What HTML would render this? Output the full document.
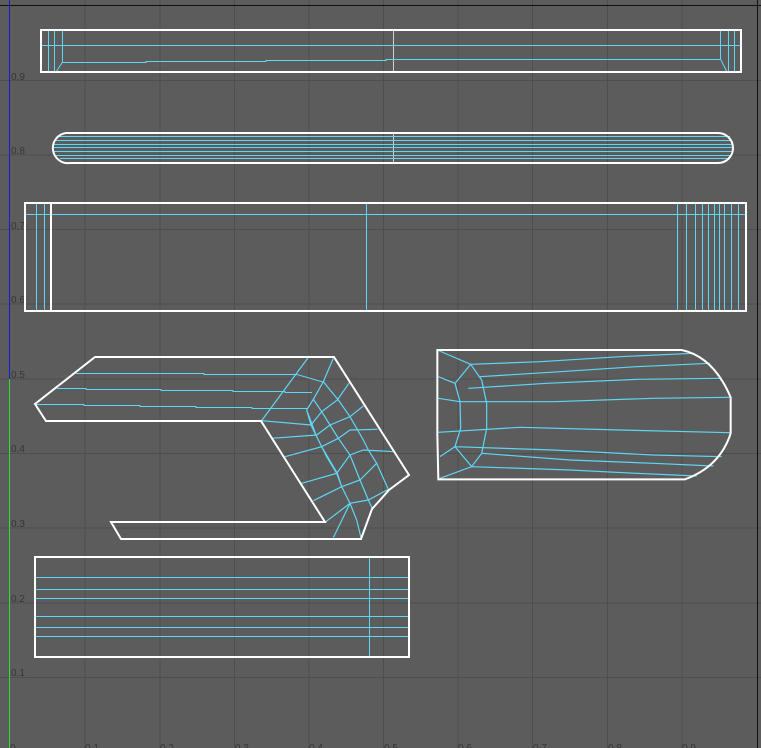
<!DOCTYPE html>
<html><head><meta charset="utf-8"><style>
html,body{margin:0;padding:0;background:#5c5c5c;width:761px;height:748px;overflow:hidden}
svg{display:block}
text{font-family:"Liberation Sans",sans-serif;font-size:10px;fill:#363636}
.w{fill:none;stroke:#fff;stroke-width:2}
.c{fill:none;stroke:#5fd6f5;stroke-width:1}
.cs{fill:none;stroke:#5fd6f5;stroke-width:1.2;vector-effect:non-scaling-stroke}
.g{stroke:#4e4e4e;stroke-width:1}
.wt{fill:none;stroke:#fff;stroke-width:2;vector-effect:non-scaling-stroke}
</style></head><body>
<svg width="761" height="748" viewBox="0 0 761 748">
<rect width="761" height="748" fill="#5c5c5c"/>
<g class="g">
<line x1="85" y1="0" x2="85" y2="748"/><line x1="160" y1="0" x2="160" y2="748"/><line x1="234.5" y1="0" x2="234.5" y2="748"/><line x1="309" y1="0" x2="309" y2="748"/><line x1="383.5" y1="0" x2="383.5" y2="748"/><line x1="458" y1="0" x2="458" y2="748"/><line x1="532.5" y1="0" x2="532.5" y2="748"/><line x1="607.5" y1="0" x2="607.5" y2="748"/><line x1="682" y1="0" x2="682" y2="748"/>
<line x1="0" y1="80.5" x2="761" y2="80.5"/><line x1="0" y1="155" x2="761" y2="155"/><line x1="0" y1="229.5" x2="761" y2="229.5"/><line x1="0" y1="304" x2="761" y2="304"/><line x1="0" y1="379" x2="761" y2="379"/><line x1="0" y1="453.5" x2="761" y2="453.5"/><line x1="0" y1="528" x2="761" y2="528"/><line x1="0" y1="603" x2="761" y2="603"/><line x1="0" y1="677.5" x2="761" y2="677.5"/>
</g>
<line x1="0" y1="5.5" x2="761" y2="5.5" stroke="#111" stroke-width="1"/>
<line x1="757.5" y1="0" x2="757.5" y2="748" stroke="#111" stroke-width="1"/>
<line x1="9.5" y1="0" x2="9.5" y2="379" stroke="#1a1acc" stroke-width="1"/>
<line x1="9.5" y1="379" x2="9.5" y2="748" stroke="#33dd33" stroke-width="1"/>
<text x="11" y="80">0.9</text><text x="11" y="154">0.8</text><text x="11" y="229">0.7</text><text x="11" y="303">0.6</text><text x="11" y="378">0.5</text><text x="11" y="452">0.4</text><text x="11" y="527">0.3</text><text x="11" y="602">0.2</text><text x="11" y="676">0.1</text>
<text x="10" y="751">0</text><text x="85" y="751">0.1</text><text x="160" y="751">0.2</text><text x="235" y="751">0.3</text><text x="309" y="751">0.4</text><text x="384" y="751">0.5</text><text x="458" y="751">0.6</text><text x="533" y="751">0.7</text><text x="608" y="751">0.8</text><text x="682" y="751">0.9</text>

<!-- shape 1 -->
<line x1="393.5" y1="30" x2="393.5" y2="72" stroke="#cfcfcf" stroke-width="1"/>
<path class="c" d="M48.5 31V72M54.5 31V72M62.5 31V62L56 72M42 45.5H741M62 62.5H146V61.5H266V60.5H386V59.5H720M720.5 31V59L727 72M728.5 31V72M734.5 31V72"/>
<rect class="w" x="41" y="30" width="700" height="42"/>
<!-- shape 2 -->
<line x1="393.5" y1="133" x2="393.5" y2="163" stroke="#cfcfcf" stroke-width="1"/>
<path class="c" d="M58 136.5H730M55 140.5H732M54 144.5H733M54 147.5H733M54 151.5H733M56 155.5H732M60 158.5H728"/>
<path class="w" d="M66 133H718A15 15 0 0 1 718 163H70A15 15 0 0 1 66 133Z"/>
<!-- shape 3 -->
<path class="c" d="M36.5 204V311M44.5 204V311M26 214.5H746M366.5 204V311M677.5 204V311M686.5 204V311M695.5 204V311M702.5 204V311M708.5 204V311M714.5 204V311M719.5 204V311M724.5 204V311M731.5 204V311M738.5 204V311"/>
<line x1="51" y1="203" x2="51" y2="311" stroke="#fff" stroke-width="2"/>
<rect class="w" x="25" y="203" width="721" height="108"/>
<!-- shape 4 -->
<path class="c" d="M76 373.5H204V374.5H297L323 382M57 388.5H86V389.5H161V390.5H233V391.5H285V392.5H312M35 404.5H84V405.5H140V406.5H196V407.5H252V408.5H307"/>
<g transform="translate(250,350) scale(0.33333)">
<path class="cs" d="M175 22L35 212M252 20L220 95L190 148L170 180L183 225L215 290L262 370L275 410L300 460L320 510L333 563M220 95L240 120L265 150L300 200L340 270L355 300L380 340L415 418M190 148L215 185L240 225L265 265L300 315L330 390L355 450L368 478M170 180L200 260L230 320L260 370L275 410L300 460L250 563M35 212L183 225L215 185L262 150L298 98M65 265L200 255L240 225L300 200L340 168M105 320L215 290L265 265L300 240L382 238M155 400L260 370L300 315L340 300L432 305M190 452L275 410L330 390L380 340M225 517L300 460L355 450L415 418"/>
</g>
<path class="w" d="M95 357H334L409 475L389 490L372 509L361 539H121L111 522H325L261 421H46L35 404Z"/>
<!-- shape 5 -->
<g transform="translate(420,340) scale(0.33333)">
<path class="cs" d="M152 73L360 65L600 50L820 40M180 110L420 95L650 80L870 70M145 145L380 130L650 118L905 115M120 185L400 185L700 175L930 172M55 277L300 262L600 270L930 278M105 320L400 330L700 345L905 350M185 340L450 360L700 370L880 378M155 380L450 390L650 400L830 408M52 30L152 73L105 130L120 185L122 265L105 320L155 380L60 415M152 73L185 120L200 190L200 265L185 340L155 380M55 110L105 130M55 175L120 185M60 350L105 320"/>
<path class="wt" d="M52 30H785Q880 50 932 172V280Q900 380 795 418H55L52 285Z"/>
</g>
<!-- shape 6 -->
<path class="c" d="M36 577.5H409M36 589.5H409M36 598.5H409M36 616.5H409M36 627.5H409M36 636.5H409M369.5 557V657"/>
<rect class="w" x="35" y="557" width="374" height="100"/>
</svg>
</body></html>
